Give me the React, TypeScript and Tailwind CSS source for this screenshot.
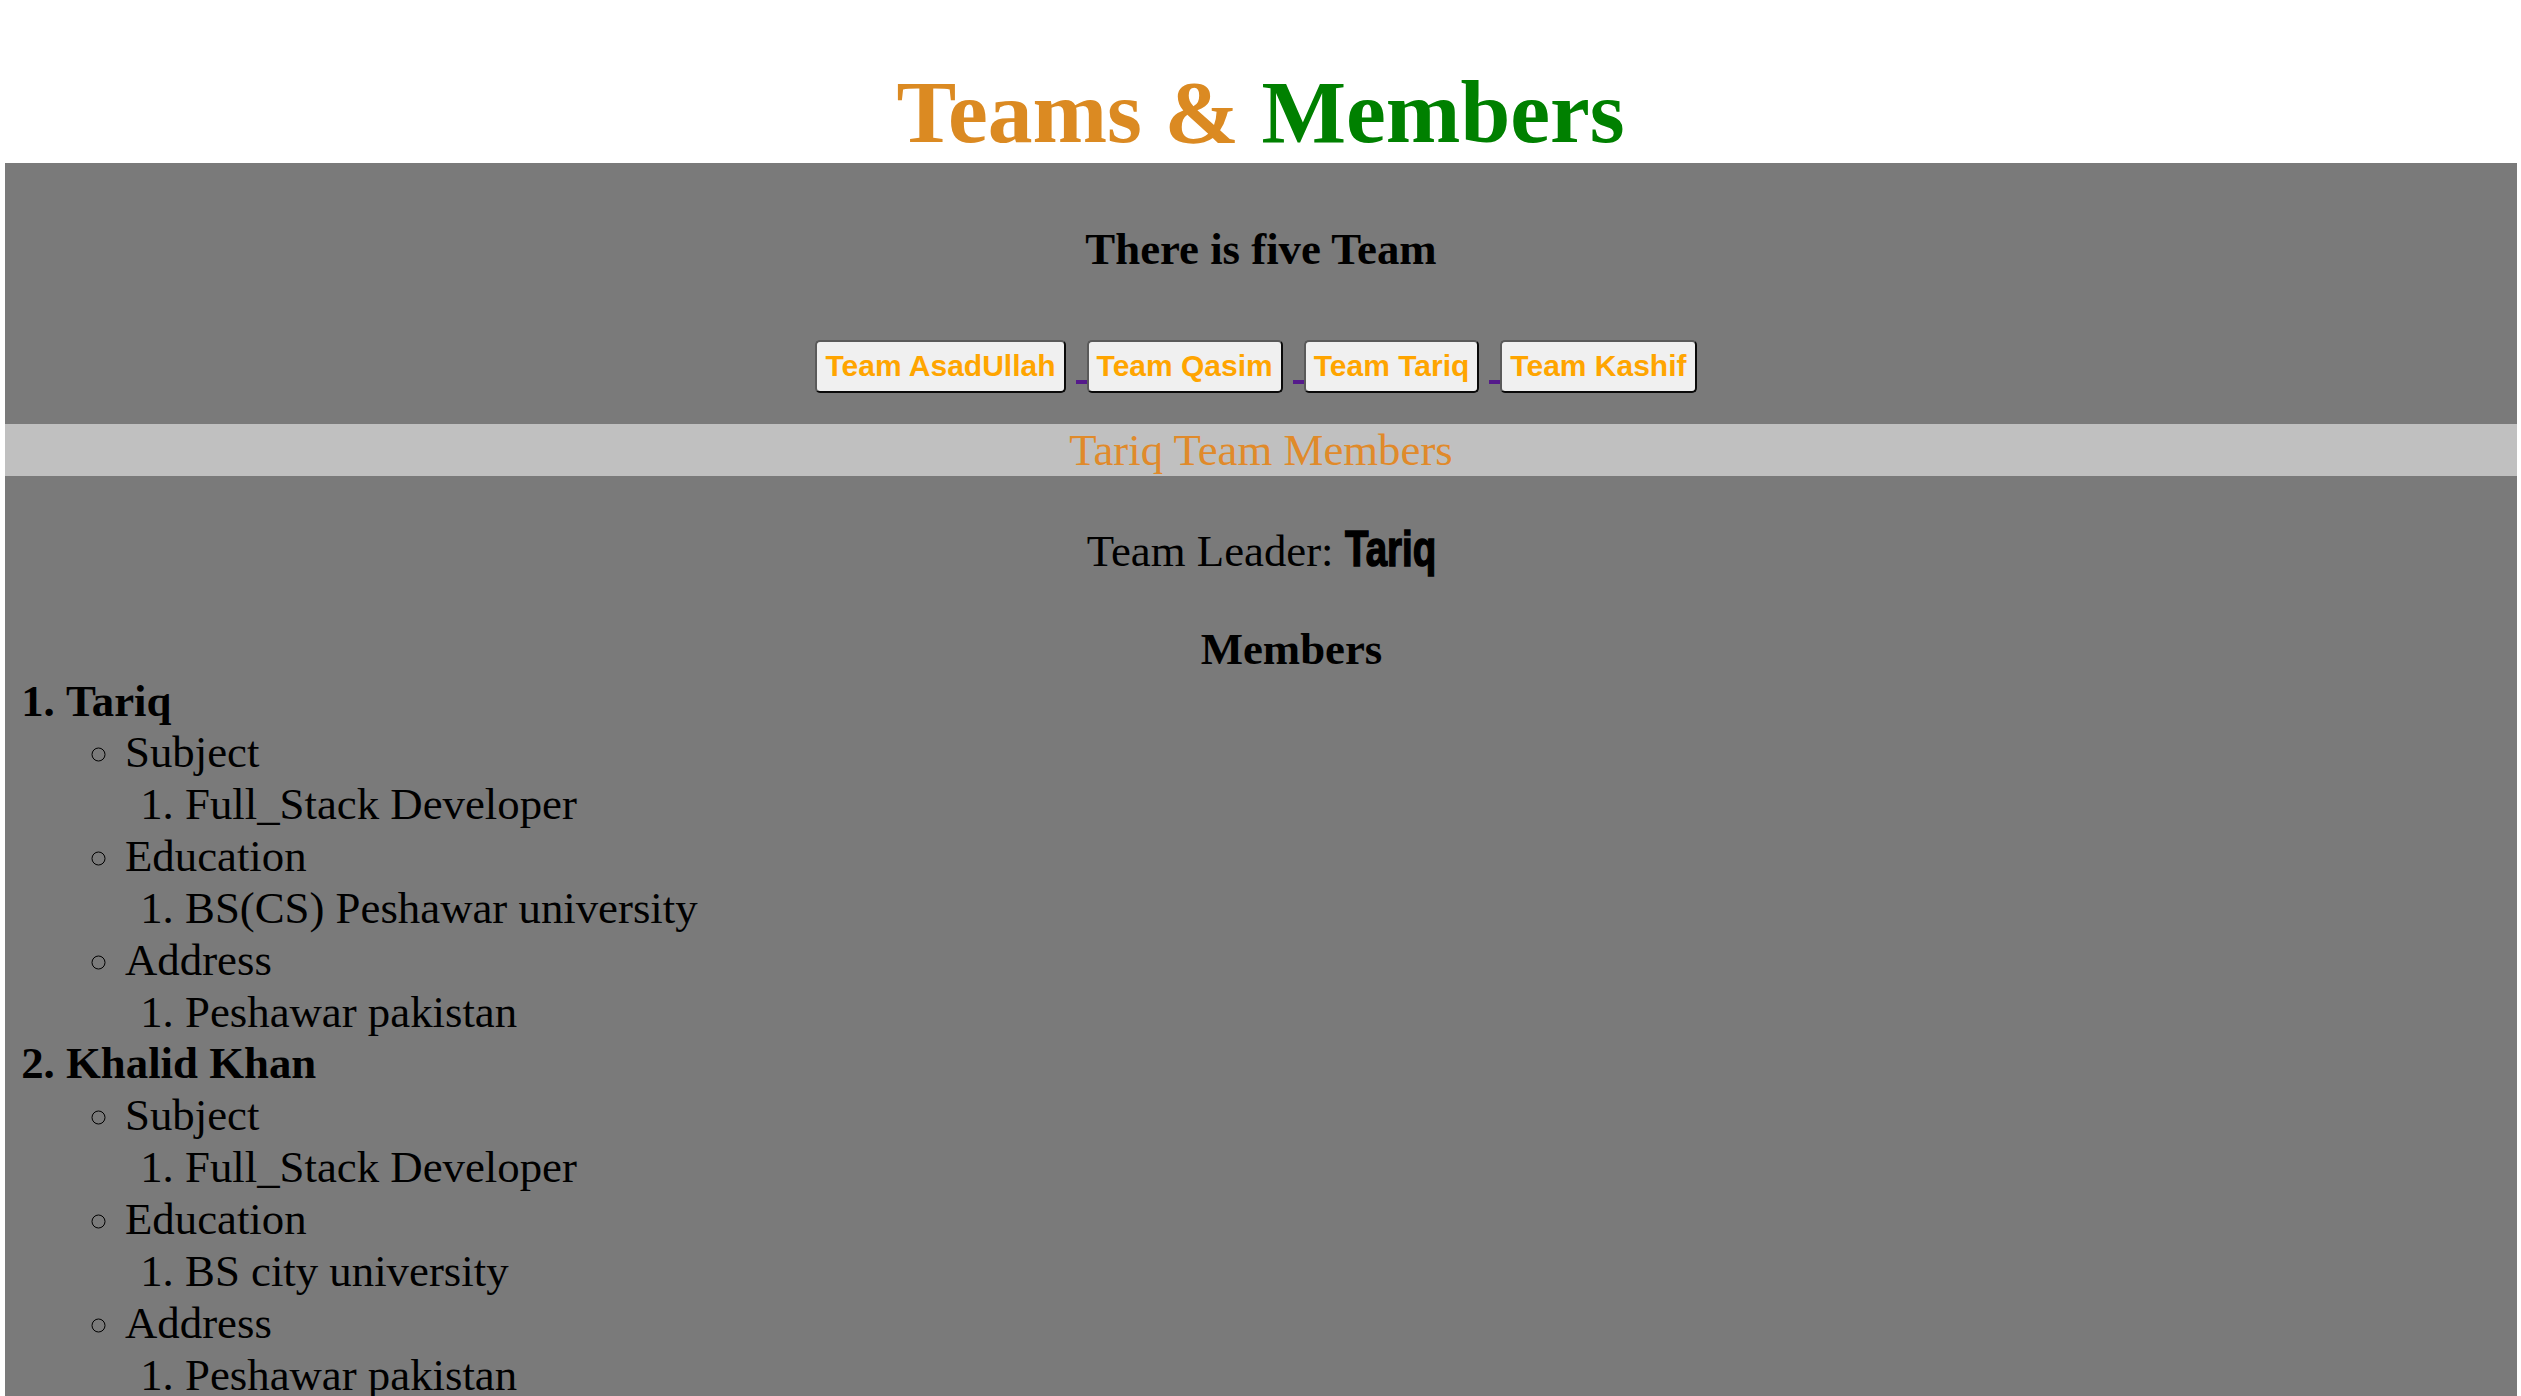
const teams = ['Team AsadUllah', 'Team Qasim', 'Team Tariq', 'Team Kashif'];

const members = [
  { name: 'Tariq', subject: 'Full_Stack Developer', education: 'BS(CS) Peshawar university', address: 'Peshawar pakistan' },
  { name: 'Khalid Khan', subject: 'Full_Stack Developer', education: 'BS city university', address: 'Peshawar pakistan' },
];

const App = () => {
  return (
    <div className="min-h-screen bg-white font-['Liberation_Serif',serif] text-black">
      <h1 className="pt-[60px] text-center text-[89.6px] font-bold leading-[103px]">
        <span className="text-[#db8a22]">Teams &amp; </span>
        <span className="text-[#008000]">Members</span>
      </h1>

      <div className="ml-[5px] mr-[4px] min-h-[1233px] bg-[#7a7a7a] pt-[61px] text-[44.8px] leading-[51.85px]">
        <h4 className="text-center font-bold">There is five Team</h4>

        <div className="mt-[64px] flex justify-center">
          {teams.map((team, i) => (
            <div key={team} className="flex items-start">
              <button className="mr-[10px] flex h-[53px] items-center rounded-[5px] border-2 border-t-[#5a5a5a] border-l-[#5a5a5a] border-b-[#0a0a0a] border-r-[#0a0a0a] bg-[#f0f0f0] px-[8px] font-['Liberation_Sans',Arial,sans-serif] text-[30px] font-bold leading-[34px] text-[#ffa500]">
                {team}
              </button>
              {i < teams.length - 1 && <span className="mt-[40px] h-[4px] w-[11px] bg-[#551a8b]" />}
            </div>
          ))}
        </div>

        <div className="mt-[31px] bg-[#c0c0c0] text-center leading-[52px] text-[#e08a2a]">Tariq Team Members</div>

        <p className="mt-[48px] text-center">
          Team Leader:{' '}
          <span className="mr-[-28px] inline-block origin-left scale-x-[0.77] font-['Liberation_Sans',Arial,sans-serif] text-[50px] font-bold [-webkit-text-stroke:1.5px_black]">
            Tariq
          </span>
        </p>

        <div className="mt-[46px] pl-[61px]">
          <h4 className="text-center font-bold">Members</h4>
          <ol className="list-outside list-decimal">
            {members.map((m) => (
              <li key={m.name} className="font-bold">
                {m.name}
                <ul className="list-outside list-[circle] pl-[59px] font-normal">
                  <li>
                    Subject
                    <ol className="list-outside list-decimal pl-[60px]">
                      <li>{m.subject}</li>
                    </ol>
                  </li>
                  <li>
                    Education
                    <ol className="list-outside list-decimal pl-[60px]">
                      <li>{m.education}</li>
                    </ol>
                  </li>
                  <li>
                    Address
                    <ol className="list-outside list-decimal pl-[60px]">
                      <li>{m.address}</li>
                    </ol>
                  </li>
                </ul>
              </li>
            ))}
          </ol>
        </div>
      </div>
    </div>
  );
};

export default App;
